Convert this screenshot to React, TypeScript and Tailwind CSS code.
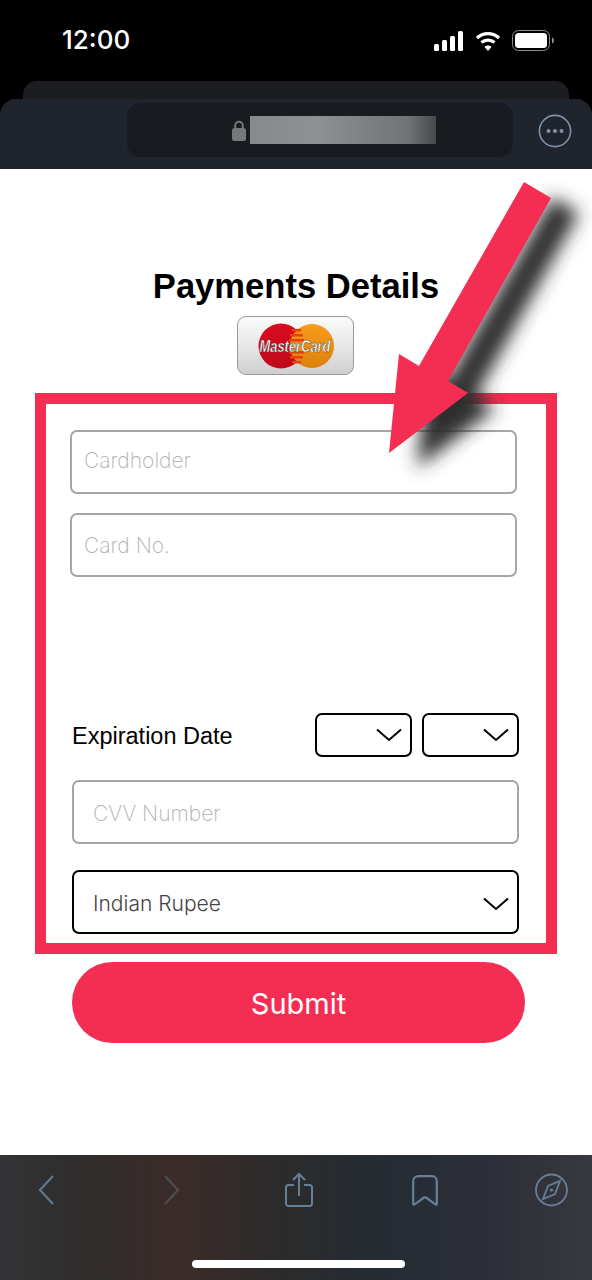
import React from 'react';

const Chevron: React.FC = () => (
  <svg width="26" height="14" viewBox="0 0 26 14" fill="none" stroke="#000" strokeWidth="2">
    <path d="M1 1.5 L13 12 L25 1.5" />
  </svg>
);

const StatusBar: React.FC = () => (
  <div className="flex h-[81px] items-start justify-between pl-[62px] pr-[37px] pt-[24px] text-white">
    <span className="font-['Inter',sans-serif] text-[26px] font-medium leading-[32px]">12:00</span>
    <div className="mt-[6px] flex items-center gap-[11px]">
      <svg width="30" height="20" viewBox="0 0 30 20" fill="#fff">
        <rect x="0" y="13" width="5" height="7" rx="1.5" />
        <rect x="8" y="9" width="5" height="11" rx="1.5" />
        <rect x="16" y="5" width="5" height="15" rx="1.5" />
        <rect x="24" y="0" width="5" height="20" rx="1.5" />
      </svg>
      <svg width="26" height="20" viewBox="0 0 26 20" fill="none" stroke="#fff" strokeWidth="3.2">
        <path d="M2 7 C8 1.2 18 1.2 24 7" />
        <path d="M6.5 11.5 C10 8.2 16 8.2 19.5 11.5" />
        <path d="M13 20 L9.4 15.8 C11.4 14.2 14.6 14.2 16.6 15.8 Z" fill="#fff" stroke="none" />
      </svg>
      <svg width="43" height="21" viewBox="0 0 43 21" fill="none">
        <rect x="0.5" y="0.5" width="37" height="20" rx="6" stroke="#8c8c8c" />
        <rect x="3" y="3" width="32" height="15" rx="3.5" fill="#fff" />
        <path d="M40 7.5 C41.6 8 42 9.4 42 10.5 C42 11.6 41.6 13 40 13.5 Z" fill="#8c8c8c" />
      </svg>
    </div>
  </div>
);

const BrowserBar: React.FC = () => (
  <div className="flex h-[70px] items-start rounded-t-[16px] bg-[#20242c] pt-[4px]">
    <div className="ml-[127px] flex h-[54px] w-[386px] items-center rounded-[14px] bg-[#191b20] pl-[105px]">
      <svg width="14" height="21" viewBox="0 0 14 21" fill="#77787a">
        <path d="M3.2 9 V5.6 a3.8 3.8 0 0 1 7.6 0 V9" fill="none" stroke="#77787a" strokeWidth="2" />
        <rect x="0" y="8" width="14" height="13" rx="2.5" />
      </svg>
      <div className="ml-[4px] h-[28px] w-[186px] bg-[linear-gradient(90deg,#88898b_0%,#8f9092_35%,#7a7b7d_70%,#727375_85%,#47494c_100%)]" />
    </div>
    <svg className="ml-[25px] mt-[11px]" width="34" height="34" viewBox="0 0 34 34" fill="none">
      <circle cx="17" cy="17" r="15.6" stroke="#7f93ab" strokeWidth="1.6" />
      <circle cx="10.5" cy="17" r="2" fill="#7f93ab" />
      <circle cx="17" cy="17" r="2" fill="#7f93ab" />
      <circle cx="23.5" cy="17" r="2" fill="#7f93ab" />
    </svg>
  </div>
);

const MasterCardBadge: React.FC = () => (
  <div className="mr-[1px] mt-[10px] flex h-[59px] w-[117px] items-center justify-center rounded-[9px] border border-[#9a9a9a] bg-[linear-gradient(180deg,#fbfbfb_0%,#e9e9e9_45%,#cfcfcf_100%)]">
    <svg width="84" height="46" viewBox="0 0 84 46">
      <defs>
        <linearGradient id="mcRed" x1="0" y1="0" x2="0" y2="1">
          <stop offset="0" stopColor="#dc0a20" />
          <stop offset="1" stopColor="#bd0a18" />
        </linearGradient>
        <linearGradient id="mcOrange" x1="0" y1="0" x2="0" y2="1">
          <stop offset="0" stopColor="#f89a1c" />
          <stop offset="1" stopColor="#dc810c" />
        </linearGradient>
      </defs>
      <circle cx="27" cy="23" r="22.5" fill="url(#mcRed)" />
      <circle cx="58" cy="23" r="22" fill="url(#mcOrange)" />
      <path d="M38 6 h9 v2.5 h-9z M36 11 h13 v2.5 h-13z M35 16 h15 v2.5 h-15z M35 28 h15 v2.5 h-15z M36 33 h13 v2.5 h-13z M38 38 h9 v2.5 h-9z" fill="#e8400f" />
      <text
        transform="translate(41 29) scale(0.76 1)"
        textAnchor="middle"
        fontFamily="'Liberation Sans', sans-serif"
        fontSize="17"
        fontWeight="700"
        fontStyle="italic"
        fill="#fff"
        stroke="#444"
        strokeWidth="0.5"
      >
        MasterCard
      </text>
    </svg>
  </div>
);

const PaymentForm: React.FC = () => (
  <div className="mt-[18px] flex h-[561px] w-[522px] flex-col border-[11px] border-[#f42e52] font-['Liberation_Sans',sans-serif]">
    <input
      placeholder="Cardholder"
      className="ml-[24px] mt-[26px] h-[64px] w-[447px] rounded-[7px] border-2 border-[#a5a5a5] pb-[4px] pl-[12px] font-['Inter',sans-serif] text-[21px] font-extralight placeholder:text-[#b0b0b0]"
    />
    <input
      placeholder="Card No."
      className="ml-[24px] mt-[19px] h-[64px] w-[447px] rounded-[7px] border-2 border-[#a5a5a5] pl-[12px] font-['Inter',sans-serif] text-[21px] font-extralight placeholder:text-[#b0b0b0]"
    />
    <div className="ml-[26px] mt-[136px] flex h-[44px] w-[447px] items-center">
      <span className="pt-[4px] text-[23.5px] text-black">Expiration Date</span>
      <div className="ml-auto flex h-[44px] w-[97px] items-center justify-end rounded-[7px] border-2 border-black pr-[8px]">
        <Chevron />
      </div>
      <div className="ml-[10px] flex h-[44px] w-[97px] items-center justify-end rounded-[7px] border-2 border-black pr-[8px]">
        <Chevron />
      </div>
    </div>
    <input
      placeholder="CVV Number"
      className="ml-[26px] mt-[23px] h-[64px] w-[447px] rounded-[7px] border-2 border-[#a5a5a5] pl-[19px] pt-[2px] font-['Inter',sans-serif] text-[21px] font-extralight placeholder:text-[#b0b0b0]"
    />
    <div className="ml-[26px] mt-[26px] flex h-[64px] w-[447px] items-center justify-between rounded-[7px] border-2 border-black pl-[19px] pr-[8px]">
      <span className="pt-[3px] font-['Inter',sans-serif] text-[21px] font-light text-[#444]">Indian Rupee</span>
      <div className="pt-[4px]">
        <Chevron />
      </div>
    </div>
  </div>
);

const BottomBar: React.FC = () => (
  <div className="flex h-[125px] flex-col bg-[linear-gradient(90deg,#333436_0%,#2f2d2c_14%,#3b2b29_30%,#2d2b2b_45%,#252c33_65%,#2e2f38_85%,#38393e_100%)]">
    <div className="flex h-[105px] items-start pl-[38px] pt-[17px]">
      <svg className="mt-[3px]" width="16" height="30" viewBox="0 0 16 30" fill="none" stroke="#5f7890" strokeWidth="2.2">
        <path d="M15 1 L2 15 L15 29" />
      </svg>
      <svg className="ml-[110px] mt-[3px]" width="16" height="30" viewBox="0 0 16 30" fill="none" stroke="#4a4d52" strokeWidth="2.2">
        <path d="M1 1 L14 15 L1 29" />
      </svg>
      <svg className="ml-[105px]" width="28" height="35" viewBox="0 0 28 35" fill="none" stroke="#687f97" strokeWidth="2">
        <path d="M9 13 H3.5 A2.5 2.5 0 0 0 1 15.5 V31.5 A2.5 2.5 0 0 0 3.5 34 H24.5 A2.5 2.5 0 0 0 27 31.5 V15.5 A2.5 2.5 0 0 0 24.5 13 H19" />
        <path d="M14 24 V2 M8 8 L14 2 L20 8" />
      </svg>
      <svg className="ml-[99px] mt-[3px]" width="26" height="31" viewBox="0 0 26 31" fill="none" stroke="#687f97" strokeWidth="2.2">
        <path d="M1.2 29 V6 A5 5 0 0 1 6.2 1.2 H19.8 A5 5 0 0 1 24.8 6 V29 C24.8 30 24 30 23 29.2 L14 22.5 Q13 22 12 22.5 L3 29.2 C2 30 1.2 30 1.2 29 Z" />
      </svg>
      <svg className="ml-[97px] mt-[1px]" width="33" height="34" viewBox="0 0 33 34" fill="none" stroke="#687f97" strokeWidth="1.8">
        <circle cx="16.5" cy="17" r="15.5" />
        <path d="M25 8 L20 21 L8 26 L13 13 Z" />
        <circle cx="16.5" cy="17" r="1.6" fill="#687f97" stroke="none" />
      </svg>
    </div>
    <div className="ml-[192px] h-[8px] w-[213px] rounded-full bg-white" />
  </div>
);

const Arrow: React.FC = () => (
  <svg className="pointer-events-none absolute left-0 top-0" width="592" height="1280" viewBox="0 0 592 1280">
    <defs>
      <filter id="arrowShadow" x="-30%" y="-30%" width="160%" height="160%">
        <feGaussianBlur stdDeviation="9" />
      </filter>
    </defs>
    <polygon
      points="524,182 551,198 448,381 468,393 389,453 399,354 419,366"
      transform="translate(28 15)"
      fill="#2e2e2e"
      filter="url(#arrowShadow)"
    />
    <polygon points="524,182 551,198 448,381 468,393 389,453 399,354 419,366" fill="#f42e52" />
  </svg>
);

export default function App() {
  return (
    <div className="relative h-[1280px] w-[592px] overflow-hidden bg-black">
      <StatusBar />
      <div className="mx-[23px] h-[18px] rounded-t-[14px] bg-[#1b1d20]" />
      <BrowserBar />
      <main className="flex h-[986px] flex-col items-center bg-white pt-[97px]">
        <h1 className="font-['Liberation_Sans',sans-serif] text-[34.6px] font-bold leading-[40px] text-black">
          Payments Details
        </h1>
        <MasterCardBadge />
        <PaymentForm />
        <button className="ml-[5px] mt-[8px] h-[81px] w-[453px] rounded-full bg-[#f42e52] pt-[2px] font-['Inter',sans-serif] text-[29px] text-white">
          Submit
        </button>
      </main>
      <BottomBar />
      <Arrow />
    </div>
  );
}
